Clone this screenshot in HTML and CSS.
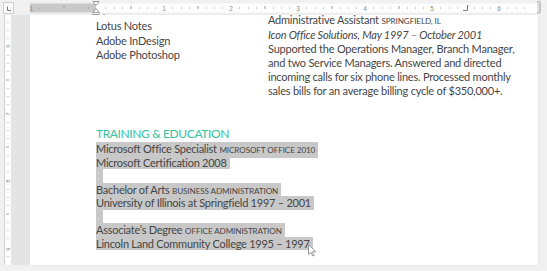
FILE: index.html
```html
<!DOCTYPE html>
<html>
<head>
<meta charset="utf-8">
<link rel="stylesheet" href="styles.css">
</head>
<body>
<div class="app">
  <div class="ruler-row">
    <div class="tab-sel">
      <svg width="10" height="11" viewBox="0 0 10 11"><path d="M3.5 3.5 V7.5 H7" fill="none" stroke="#7a7a7a" stroke-width="1"/></svg>
    </div>
    <div class="hruler">
      <svg width="512" height="15" viewBox="0 0 512 15">
        <rect x="0" y="3.5" width="66" height="9" fill="#c9c9c9"/>
        <rect x="66" y="3.5" width="441" height="9" fill="#ffffff"/>
        <rect x="507" y="3.5" width="4" height="9" fill="#c9c9c9"/>
        <g fill="#8a8a8a" font-family="Liberation Sans, sans-serif" font-size="6.5" text-anchor="middle">
          <text x="1" y="10.5">1</text>
          <text x="134" y="10.5">1</text>
          <text x="201" y="10.5">2</text>
          <text x="268" y="10.5">3</text>
          <text x="335" y="10.5">4</text>
          <text x="402" y="10.5">5</text>
          <text x="469" y="10.5">6</text>
        </g>
        <g fill="#9a9a9a">
          <rect x="9" y="7.5" width="1" height="1"/><rect x="17" y="7.5" width="1" height="1"/><rect x="25" y="7.5" width="1" height="1"/>
          <rect x="33.5" y="6" width="1" height="3"/>
          <rect x="42" y="7.5" width="1" height="1"/><rect x="50" y="7.5" width="1" height="1"/><rect x="58" y="7.5" width="1" height="1"/>
          <rect x="75" y="7.5" width="1" height="1"/><rect x="84" y="7.5" width="1" height="1"/><rect x="92" y="7.5" width="1" height="1"/>
          <rect x="100.5" y="6" width="1" height="3"/>
          <rect x="109" y="7.5" width="1" height="1"/><rect x="117" y="7.5" width="1" height="1"/><rect x="125" y="7.5" width="1" height="1"/>
          <rect x="142" y="7.5" width="1" height="1"/><rect x="151" y="7.5" width="1" height="1"/><rect x="159" y="7.5" width="1" height="1"/>
          <rect x="167.5" y="6" width="1" height="3"/>
          <rect x="176" y="7.5" width="1" height="1"/><rect x="184" y="7.5" width="1" height="1"/><rect x="192" y="7.5" width="1" height="1"/>
          <rect x="209" y="7.5" width="1" height="1"/><rect x="218" y="7.5" width="1" height="1"/><rect x="226" y="7.5" width="1" height="1"/>
          <rect x="234.5" y="6" width="1" height="3"/>
          <rect x="243" y="7.5" width="1" height="1"/><rect x="251" y="7.5" width="1" height="1"/><rect x="259" y="7.5" width="1" height="1"/>
          <rect x="276" y="7.5" width="1" height="1"/><rect x="285" y="7.5" width="1" height="1"/><rect x="293" y="7.5" width="1" height="1"/>
          <rect x="301.5" y="6" width="1" height="3"/>
          <rect x="310" y="7.5" width="1" height="1"/><rect x="318" y="7.5" width="1" height="1"/><rect x="326" y="7.5" width="1" height="1"/>
          <rect x="343" y="7.5" width="1" height="1"/><rect x="352" y="7.5" width="1" height="1"/><rect x="360" y="7.5" width="1" height="1"/>
          <rect x="368.5" y="6" width="1" height="3"/>
          <rect x="377" y="7.5" width="1" height="1"/><rect x="385" y="7.5" width="1" height="1"/><rect x="393" y="7.5" width="1" height="1"/>
          <rect x="410" y="7.5" width="1" height="1"/><rect x="419" y="7.5" width="1" height="1"/><rect x="427" y="7.5" width="1" height="1"/>
          <rect x="444" y="7.5" width="1" height="1"/><rect x="452" y="7.5" width="1" height="1"/><rect x="460" y="7.5" width="1" height="1"/>
          <rect x="477" y="7.5" width="1" height="1"/><rect x="486" y="7.5" width="1" height="1"/><rect x="494" y="7.5" width="1" height="1"/>
        </g>
        <path d="M437.5 5 V10.5 H433" fill="none" stroke="#7a7a7a" stroke-width="1"/>
        <path d="M63 1.5 H69 L66 5.5 Z M63 12.5 H69 L66 8.5 Z" fill="#ffffff" stroke="#9a9a9a" stroke-width="1"/>
        <rect x="63" y="12.5" width="6" height="2" fill="#ffffff" stroke="#9a9a9a" stroke-width="1"/>
        <rect x="73" y="14" width="2" height="1" fill="#b0b0b0"/>
        <path d="M507 1.5 L510 1.5 L510 13 L507 13" fill="#e0e0e0" stroke="#b5b5b5" stroke-width="1"/>
      </svg>
    </div>
  </div>
  <div class="doc-row">
    <div class="vruler">
      <svg width="6" height="250" viewBox="0 0 6 250">
        <g fill="#a0a0a0">
          <rect x="2.5" y="7" width="1" height="1"/><rect x="2.5" y="15" width="1" height="1"/><rect x="2.5" y="23" width="1" height="1"/>
          <rect x="2.5" y="40" width="1" height="1"/><rect x="2.5" y="48" width="1" height="1"/><rect x="2.5" y="56" width="1" height="1"/>
          <rect x="1" y="64.5" width="3" height="1"/>
          <rect x="2.5" y="73" width="1" height="1"/><rect x="2.5" y="81" width="1" height="1"/><rect x="2.5" y="89" width="1" height="1"/>
          <rect x="2.5" y="107" width="1" height="1"/><rect x="2.5" y="115" width="1" height="1"/><rect x="2.5" y="123" width="1" height="1"/>
          <rect x="1" y="131.5" width="3" height="1"/>
          <rect x="2.5" y="140" width="1" height="1"/><rect x="2.5" y="148" width="1" height="1"/><rect x="2.5" y="156" width="1" height="1"/>
          <rect x="2.5" y="174" width="1" height="1"/><rect x="2.5" y="182" width="1" height="1"/><rect x="2.5" y="190" width="1" height="1"/>
          <rect x="1" y="198.5" width="3" height="1"/>
          <rect x="2.5" y="207" width="1" height="1"/><rect x="2.5" y="215" width="1" height="1"/><rect x="2.5" y="223" width="1" height="1"/>
          <rect x="2.5" y="241" width="1" height="1"/>
        </g>
        <g fill="#8a8a8a" font-family="Liberation Sans, sans-serif" font-size="6" text-anchor="middle">
          <text transform="translate(5 31) rotate(-90)">6</text>
          <text transform="translate(5 99) rotate(-90)">7</text>
          <text transform="translate(5 166) rotate(-90)">8</text>
          <text transform="translate(5 234) rotate(-90)">9</text>
        </g>
      </svg>
    </div>
    <div class="gutter"></div>
    <div class="page">
      <div class="columns">
        <div class="col-left">
          <p>Lotus Notes</p>
          <p>Adobe InDesign</p>
          <p>Adobe Photoshop</p>
        </div>
        <div class="col-right">
          <p>Administrative Assistant <span class="sc">Springfield, IL</span></p>
          <p class="it">Icon Office Solutions, May 1997 – October 2001</p>
          <p>Supported the Operations Manager, Branch Manager,<br>and two Service Managers. Answered and directed<br>incoming calls for six phone lines. Processed monthly<br>sales bills for an average billing cycle of $350,000+.</p>
        </div>
      </div>
      <h2 class="heading">TRAINING &amp; EDUCATION</h2>
      <div class="selection">
        <div class="line"><span class="hl">Microsoft Office Specialist <span class="sc">Microsoft Office 2010</span></span></div>
        <div class="line"><span class="hl">Microsoft Certification 2008</span></div>
        <div class="line"><span class="hl blank"></span></div>
        <div class="line"><span class="hl">Bachelor of Arts <span class="sc">Business Administration</span></span></div>
        <div class="line"><span class="hl">University of Illinois at Springfield 1997 – 2001</span></div>
        <div class="line"><span class="hl blank"></span></div>
        <div class="line"><span class="hl">Associate’s Degree <span class="sc">Office Administration</span></span></div>
        <div class="line"><span class="hl">Lincoln Land Community College 1995 – 1997</span><svg class="cursor" width="9" height="13" viewBox="0 0 9 13"><path d="M0.5 0.5 V10.5 L3 8.2 L4.8 12 L6.2 11.4 L4.5 7.7 H7.8 Z" fill="#ffffff" stroke="#9a9a9a" stroke-width="1" stroke-linejoin="round"/></svg></div>
      </div>
    </div>
  </div>
</div>
</body>
</html>
```

FILE: styles.css
```css
* { box-sizing: border-box; }
html, body { margin: 0; padding: 0; }
body {
  width: 547px;
  height: 271px;
  overflow: hidden;
  background: #f1f1f1;
  font-family: Lato, "Noto Sans", sans-serif;
  color: #464646;
}
.app { width: 547px; height: 271px; }
.ruler-row { display: flex; height: 15px; position: relative; z-index: 1; }
.tab-sel {
  width: 11px; height: 12px;
  margin: 2px 0 0 3px;
  border: 1px solid #cfcfcf;
  background: #fafafa;
}
.tab-sel svg { display: block; }
.hruler { margin-left: 16px; }
.hruler svg { display: block; }
.doc-row { display: flex; height: 250px; }
.vruler {
  width: 7px;
  margin-left: 4px;
  border-left: 1px solid #d2d2d2;
  background: #ffffff;
}
.vruler svg { display: block; }
.gutter { width: 19px; background: #e4e4e4; }
.page {
  width: 508px;
  background: #ffffff;
  padding-left: 66px;
  box-shadow: 1px 0 3px rgba(0,0,0,0.06);
}
p { margin: 0; }
.columns { display: flex; margin-top: -2px; }
.col-left { width: 172px; padding-top: 6px; font-size: 11px; line-height: 14.5px; letter-spacing: -0.2px; }
.col-right { font-size: 11px; line-height: 14px; letter-spacing: -0.22px; }
.it { font-style: italic; }
.sc { text-transform: uppercase; font-size: 0.74em; letter-spacing: -0.1px; }
.heading {
  margin: 27px 0 0;
  font-weight: 400;
  font-size: 12px;
  line-height: 17px;
  letter-spacing: -0.38px;
  color: #35c29f;
}
.selection { font-size: 11px; line-height: 13.5px; letter-spacing: -0.25px; }
.line { height: 13.5px; display: flex; align-items: flex-start; }
.hl { display: inline-block; background: #c8c8c8; padding-right: 3px; white-space: nowrap; }
.hl.blank { width: 7px; height: 13.5px; padding: 0; }
.cursor { display: block; margin: 7px 0 0 -5px; }
```
